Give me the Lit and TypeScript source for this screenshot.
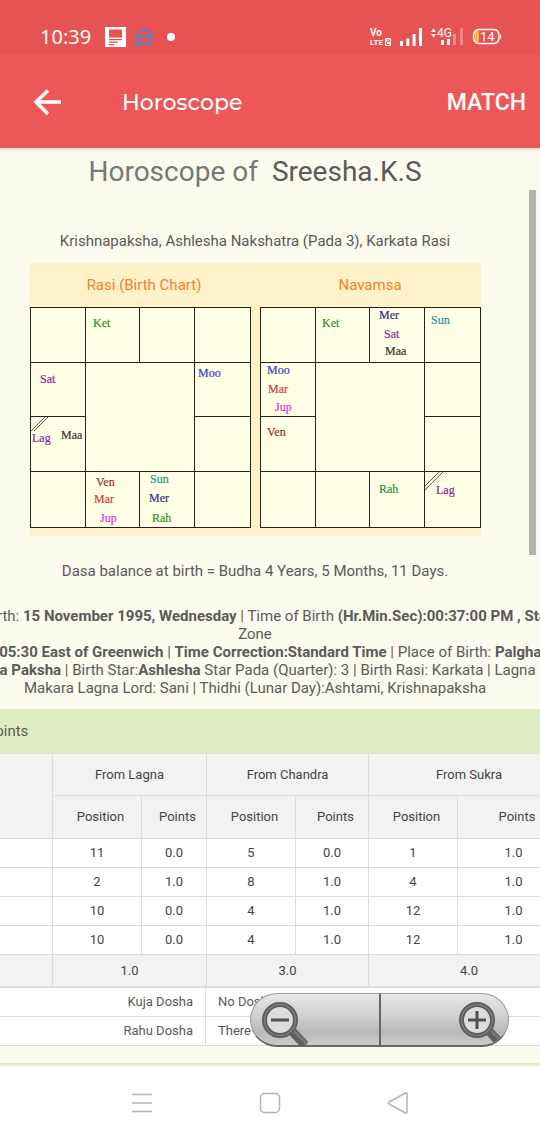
import { LitElement, html, css, svg } from "lit";
import { customElement, property } from "lit/decorators.js";

type Label = [name: string, x: number, y: number];

const PLANET_COLORS: Record<string, string> = {
  Ket: "#2c8f2c",
  Rah: "#2c8f2c",
  Sat: "#8c2a8c",
  Lag: "#8c2a8c",
  Moo: "#3a3acb",
  Maa: "#333333",
  Ven: "#8f2f2f",
  Mar: "#d63c3c",
  Jup: "#dd2fdd",
  Sun: "#2a8f8f",
  Mer: "#2f2f86",
};

const RASI: Label[] = [
  ["Ket", 63, 20], ["Sat", 10, 76], ["Moo", 168, 70], ["Lag", 2, 135],
  ["Maa", 31, 132], ["Ven", 66, 179], ["Mar", 64, 196], ["Jup", 70, 215],
  ["Sun", 120, 176], ["Mer", 119, 195], ["Rah", 122, 215],
];

const NAVAMSA: Label[] = [
  ["Ket", 62, 20], ["Mer", 119, 12], ["Sat", 124, 31], ["Maa", 125, 48],
  ["Sun", 171, 17], ["Moo", 7, 67], ["Mar", 8, 86], ["Jup", 15, 104],
  ["Ven", 7, 129], ["Rah", 119, 186], ["Lag", 176, 187],
];

const POINT_ROWS = [
  ["11", "0.0", "5", "0.0", "1", "1.0"],
  ["2", "1.0", "8", "1.0", "4", "1.0"],
  ["10", "0.0", "4", "1.0", "12", "1.0"],
  ["10", "0.0", "4", "1.0", "12", "1.0"],
];

@customElement("status-bar")
export class StatusBar extends LitElement {
  static styles = css`
    :host {
      display: flex;
      align-items: center;
      justify-content: space-between;
      height: 54px;
      box-sizing: border-box;
      padding: 22px 38px 2px 40px;
      background: #e75353;
      color: #fff;
      font-family: "Noto Sans", sans-serif;
    }
    .group { display: flex; align-items: center; }
    .left { gap: 14px; }
    .right { gap: 9px; }
    .clock { font-size: 20px; line-height: 24px; }
    svg { display: block; }
    .vo { font: 700 10px "Roboto", sans-serif; }
    .lte { font: 700 8px "Roboto", sans-serif; }
    .net { font: 400 12px "Roboto", sans-serif; }
    .level { font: 400 13px "Roboto", sans-serif; }
  `;

  render() {
    return html`
      <div class="group left">
        <span class="clock">10:39</span>
        <svg width="48" height="22" viewBox="0 0 48 22" aria-hidden="true">
          <path fill="#fff" fill-rule="evenodd" d="M0 1h21v20H0zM4 3.500v8h13v-8zM4 13h13v1.300H4zM4 15.500h9v1.200H4zM4 18h5v1.200H4z" />
          <g fill="none" stroke="#5b7fc0" stroke-width="2.200">
            <path d="M47 11a7.500 7.500 0 1 0-2.500 5.800M47 11a7.500 7.500 0 0 1-13 5.500l-2 2.500.5-5" />
            <path d="M34 11h11" />
          </g>
        </svg>
        <svg width="8" height="8" viewBox="0 0 8 8" aria-hidden="true"><circle cx="4" cy="4" r="4" fill="#fff" /></svg>
      </div>
      <div class="group right">
        <svg width="21" height="20" viewBox="0 0 21 20" fill="#fff" aria-label="VoLTE 2">
          <text class="vo" x="0" y="9">Vo</text>
          <text class="lte" x="0" y="18">LTE</text>
          <rect x="15" y="11" width="6" height="8" rx="1" />
          <path d="M16.500 13h3v2h-3v2.500h3" fill="none" stroke="#e75353" />
        </svg>
        <svg width="22" height="18" viewBox="0 0 22 18" fill="#fff" aria-hidden="true">
          <path d="M0 13h3v5H0zM6.300 10.500h3V18h-3zM12.600 6h3v12h-3zM19 0h3v18h-3z" />
        </svg>
        <svg width="32" height="20" viewBox="0 0 32 20" fill="#fff" aria-label="4G">
          <path d="M0 5l2.500-3.500L5 5zM0 7l2.500 3.500L5 7z" />
          <text class="net" x="6" y="10">4G</text>
          <path d="M10 13h3v5h-3zM16 12h3v6h-3z" />
          <path d="M22 7h3v11h-3zM29 1h3v17h-3z" opacity=".3" />
        </svg>
        <svg width="30" height="18" viewBox="0 0 30 18" aria-label="Battery 14">
          <rect x="3" y="3" width="4" height="11" rx="1" fill="#fbc02d" />
          <path d="M7 1.500h15c4 0 5 3 5 7s-1 7-5 7H7c-4 0-5.500-3-5.500-7s1.500-7 5.500-7z" fill="none" stroke="#fff" stroke-width="1.500" />
          <path d="M28 5.500c1.500 1 1.500 5 0 6z" fill="#fff" />
          <text class="level" x="8" y="13" fill="#fff">14</text>
        </svg>
      </div>
    `;
  }
}

@customElement("birth-chart")
export class BirthChart extends LitElement {
  @property({ attribute: false }) labels: Label[] = [];
  @property() hatch = "";

  static styles = css`
    :host { display: block; }
    svg { display: block; width: 100%; height: auto; }
    .field { fill: #ffffe6; stroke: #222; }
    .line { fill: none; stroke: #222; }
    .hatch { fill: none; stroke: #555; }
    .label {
      font-family: "Liberation Serif", serif;
      font-size: 12px;
      stroke-width: 0.2;
    }
  `;

  render() {
    return html`
      <svg viewBox="0 0 221 221" role="img">
        <rect class="field" x="0.5" y="0.5" width="220" height="220" />
        <path class="line" d="M55.500 0v220M164.500 0v220M0 55.500h220M0 164.500h220M109.500 0v55M109.500 165v55M0 109.500h55M165 109.500h55" />
        <path class="hatch" d=${this.hatch} />
        ${this.labels.map(
          ([name, x, y]) => svg`<text class="label" x=${x} y=${y} fill=${PLANET_COLORS[name]} stroke=${PLANET_COLORS[name]}>${name}</text>`
        )}
      </svg>
    `;
  }
}

@customElement("points-table")
export class PointsTable extends LitElement {
  static styles = css`
    :host { display: block; }
    table {
      width: 100%;
      border-collapse: collapse;
      table-layout: fixed;
      font-size: 13px;
      line-height: 16px;
      color: #444;
    }
    th, td {
      padding: 6px 0;
      border: 1px solid #dcdcdc;
      font-weight: 400;
      text-align: center;
    }
    td { height: 16px; background: #fff; }
    th { height: 29px; background: #f2f2f2; }
    .sub { height: 30px; padding-left: 7px; }
    .total td { height: 19px; background: #f2f2f2; }
    .planet { width: 112px; }
    .wide { width: 89px; }
    .lagna { width: 65px; }
    .chandra { width: 73px; }
  `;

  render() {
    return html`
      <table>
        <colgroup>
          <col class="planet" /><col class="wide" /><col class="lagna" />
          <col class="wide" /><col class="chandra" /><col class="wide" /><col />
        </colgroup>
        <thead>
          <tr>
            <th rowspan="2"></th>
            <th colspan="2">From Lagna</th>
            <th colspan="2">From Chandra</th>
            <th colspan="2">From Sukra</th>
          </tr>
          <tr>
            ${[0, 1, 2].map(() => html`<th class="sub">Position</th><th class="sub">Points</th>`)}
          </tr>
        </thead>
        <tbody>
          ${POINT_ROWS.map((row) => html`<tr><td></td>${row.map((v) => html`<td>${v}</td>`)}</tr>`)}
          <tr class="total">
            <td></td>
            <td colspan="2">1.0</td>
            <td colspan="2">3.0</td>
            <td colspan="2">4.0</td>
          </tr>
        </tbody>
      </table>
    `;
  }
}

@customElement("zoom-control")
export class ZoomControl extends LitElement {
  static styles = css`
    :host {
      display: flex;
      width: 259px;
      height: 54px;
      box-sizing: border-box;
      border: 1px solid #999;
      border-bottom: 2px solid #666;
      border-radius: 27px;
      overflow: hidden;
      background: linear-gradient(#e6e6e6, #cfcfcf 45%, #b9b9b9 75%, #cccccc);
    }
    button {
      flex: 1;
      display: flex;
      padding: 0;
      border: 0;
      background: none;
    }
    .out { border-right: 2px solid #666; }
    .in { justify-content: flex-end; }
    svg { display: block; }
  `;

  private glass(cross: boolean) {
    return html`
      <svg width="60" height="51" viewBox="0 0 60 51" fill="none">
        <path d="M40 36L54 51" stroke="#5f5f5f" stroke-width="9" />
        <path d="M42 36L56 50" stroke="#777" stroke-width="3" />
        <circle cx="29" cy="26" r="15.500" fill="#dcdcdc" stroke="#5c5c5c" stroke-width="5" />
        <circle cx="29" cy="26" r="15.500" stroke="#7d7d7d" stroke-width="1.500" />
        <path d=${cross ? "M20 26h18M29 17v18" : "M20 26h18"} stroke="#505050" stroke-width="3" />
      </svg>
    `;
  }

  render() {
    return html`
      <button class="out" aria-label="Zoom out">${this.glass(false)}</button>
      <button class="in" aria-label="Zoom in">${this.glass(true)}</button>
    `;
  }
}

@customElement("app-root")
export class AppRoot extends LitElement {
  static styles = css`
    :host {
      display: flex;
      flex-direction: column;
      min-height: 100vh;
      overflow: hidden;
      background: #fff;
      color: #5a5a5a;
      font-family: "Roboto", sans-serif;
      font-size: 15px;
      line-height: 18px;
    }
    .appbar {
      display: flex;
      align-items: center;
      box-sizing: border-box;
      height: 94px;
      padding: 4px 14px 0 32px;
      background: #ed5757;
      color: #fff;
    }
    .appbar button {
      padding: 0;
      border: 0;
      background: none;
      color: inherit;
      font: 500 23px/28px "Roboto", sans-serif;
    }
    .appbar svg { display: block; }
    .appbar h1 {
      flex: 1;
      margin: 0 0 0 60px;
      font: 500 22px/28px "Montserrat", "Inter", sans-serif;
    }
    .view {
      flex: 1;
      position: relative;
      overflow: hidden;
      background: #fbfbef;
      border-bottom: 3px solid #e3edc8;
      box-shadow: inset 0 4px 3px -2px #e6ddd0;
    }
    .sheet {
      display: flex;
      flex-direction: column;
      margin: 0 -30px 0 -60px;
      padding-bottom: 16px;
    }
    .title {
      display: flex;
      justify-content: center;
      gap: 14px;
      margin: 6px 0 0;
      font-size: 28px;
      line-height: 36px;
      font-weight: 400;
      color: #777;
    }
    .name { color: #5a5a5a; }
    .line { margin: 0; text-align: center; }
    .rasi { margin-top: 42px; }
    .charts {
      align-self: center;
      display: grid;
      grid-template-columns: 1fr 1fr;
      column-gap: 9px;
      width: 451px;
      margin-top: 13px;
      padding-bottom: 8px;
      background: #fff2c8;
    }
    .charts h2 {
      margin: 0;
      font-size: 15px;
      line-height: 44px;
      font-weight: 400;
      text-align: center;
      color: #f0822a;
    }
    .charts .first { padding-left: 8px; }
    .dasa { margin-top: 26px; }
    .details {
      display: flex;
      flex-direction: column;
      align-items: center;
      margin-top: 27px;
      white-space: nowrap;
    }
    .section {
      margin: 12px 0 0;
      padding: 0 8px;
      background: #e0ecc2;
      font-size: 15px;
      line-height: 44px;
      font-weight: 400;
    }
    .doshas {
      border-collapse: collapse;
      table-layout: fixed;
      width: 100%;
      font-size: 13px;
      line-height: 16px;
      background: #fff;
    }
    .doshas th, .doshas td {
      height: 16px;
      padding: 6px 12px;
      border: 1px solid #dcdcdc;
      font-weight: 400;
      text-align: left;
    }
    .doshas th { width: 240px; text-align: right; }
    .thumb {
      position: absolute;
      top: 42px;
      right: 4px;
      width: 7px;
      height: 365px;
      background: #b3b3ab;
    }
    zoom-control {
      position: absolute;
      right: 31px;
      bottom: 16px;
    }
    .nav {
      display: flex;
      justify-content: center;
      gap: 106px;
      height: 74px;
    }
    .nav button {
      display: flex;
      align-items: center;
      padding: 0 0 1px;
      border: 0;
      background: none;
    }
  `;

  render() {
    return html`
      <status-bar></status-bar>
      <header class="appbar">
        <button aria-label="Back">
          <svg width="30" height="28" viewBox="0 0 30 28" fill="none" stroke="#fff" stroke-width="3.500">
            <path d="M29 13H4M16 1.500L4 13l12 12" />
          </svg>
        </button>
        <h1>Horoscope</h1>
        <button>MATCH</button>
      </header>
      <main class="view">
        <div class="sheet">
          <h1 class="title"><span>Horoscope of</span><span class="name">Sreesha.K.S</span></h1>
          <p class="line rasi">Krishnapaksha, Ashlesha Nakshatra (Pada 3), Karkata Rasi</p>
          <div class="charts">
            <h2 class="first">Rasi (Birth Chart)</h2>
            <h2>Navamsa</h2>
            <birth-chart .labels=${RASI} hatch="M1 124L15 110M4 124L18 110"></birth-chart>
            <birth-chart .labels=${NAVAMSA} hatch="M165 179L179 165M165 183L183 165"></birth-chart>
          </div>
          <p class="line dasa">Dasa balance at birth = Budha 4 Years, 5 Months, 11 Days.</p>
          <div class="details">
            <span>| Date of Birth: <b>15 November 1995, Wednesday</b> | Time of Birth <b>(Hr.Min.Sec):00:37:00 PM , Standard</b></span>
            <span>Zone</span>
            <span><b>GMT 05:30 East of Greenwich</b> | <b>Time Correction:Standard Time</b> | Place of Birth: <b>Palghat</b></span>
            <span><b>Chitra Paksha</b> | Birth Star:<b>Ashlesha</b> Star Pada (Quarter): 3 | Birth Rasi: Karkata | Lagna :</span>
            <span>Makara Lagna Lord: Sani | Thidhi (Lunar Day):Ashtami, Krishnapaksha</span>
          </div>
          <h2 class="section">Papa Points</h2>
          <points-table></points-table>
          <table class="doshas">
            <tr><th scope="row">Kuja Dosha</th><td>No Dosha</td></tr>
            <tr><th scope="row">Rahu Dosha</th><td>There is No Dosha</td></tr>
          </table>
        </div>
        <div class="thumb"></div>
        <zoom-control></zoom-control>
      </main>
      <nav class="nav">
        <button aria-label="Recent apps">
          <svg width="22" height="22" viewBox="0 0 22 22" stroke="#b3b3b3" stroke-width="1.500"><path d="M1 2.500h20M1 11h20M1 19.500h20" /></svg>
        </button>
        <button aria-label="Home">
          <svg width="22" height="22" viewBox="0 0 22 22" fill="none" stroke="#b3b3b3" stroke-width="1.500"><rect x="1.500" y="1.500" width="19" height="19" rx="4" /></svg>
        </button>
        <button aria-label="Back">
          <svg width="22" height="24" viewBox="0 0 22 24" fill="none" stroke="#b3b3b3" stroke-width="1.500" stroke-linejoin="round"><path d="M18.500 2Q20 1 20 3v18q0 2-1.500 1L2 13q-1.500-1 0-2z" /></svg>
        </button>
      </nav>
    `;
  }
}
